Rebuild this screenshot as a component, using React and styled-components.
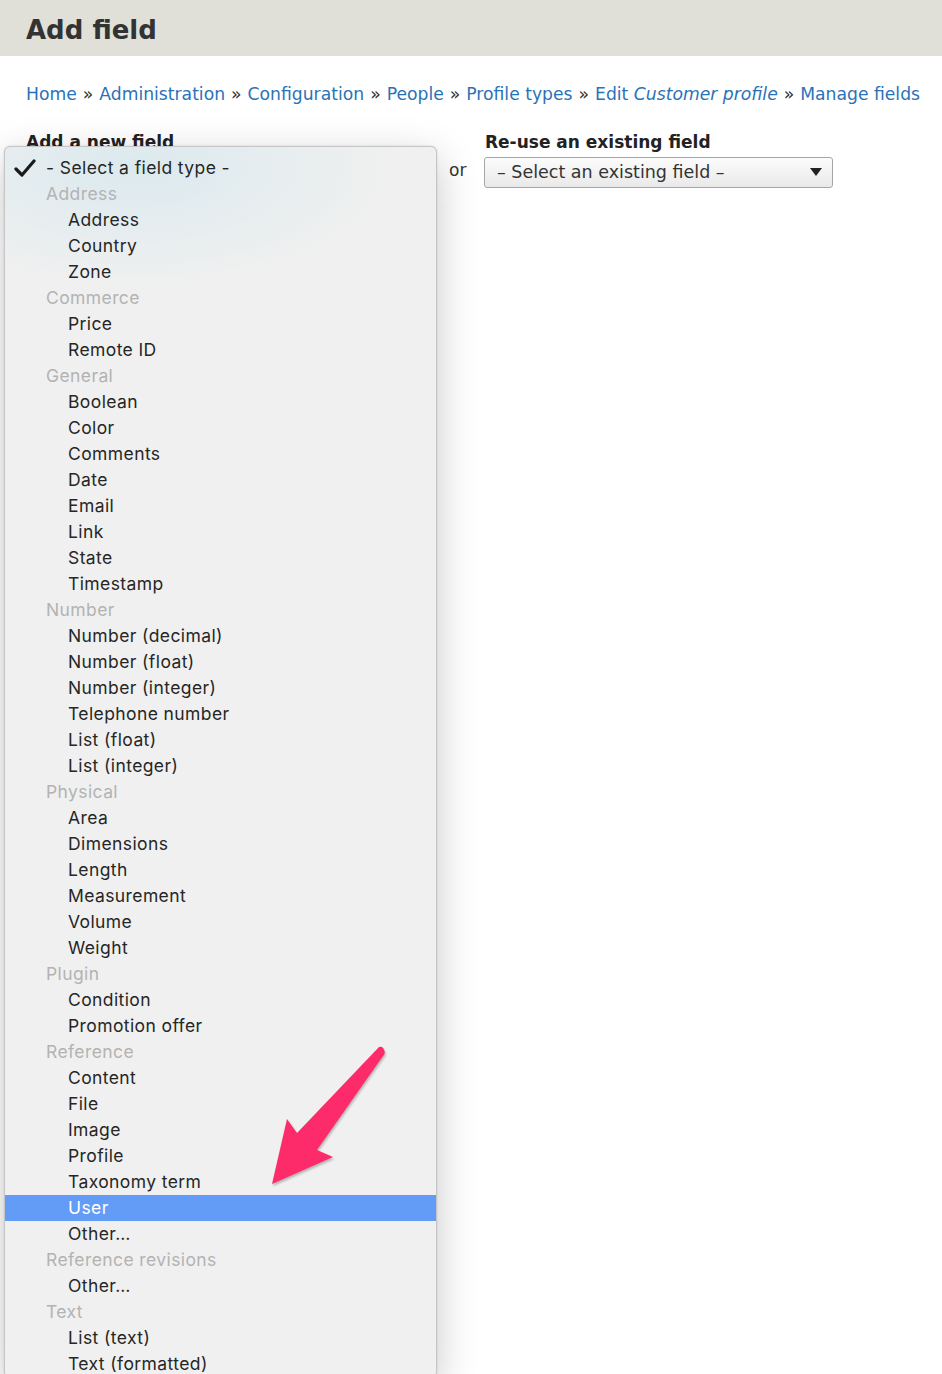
import React from 'react';
import styled, { createGlobalStyle } from 'styled-components';

const GlobalStyle = createGlobalStyle`
    html, body {
        margin: 0;
        padding: 0;
        overflow: hidden;
        background: #fff;
    }
    body {
        font-family: "DejaVu Sans", Verdana, sans-serif;
        color: #333;
    }
`;

const Page = styled.div`
    position: relative;
    min-height: 1374px;
`;

const Header = styled.header`
    background: #e0e0d8;
    height: 56px;
    display: flex;
    align-items: center;
    padding: 4px 26px 0;
    box-sizing: border-box;
`;

const Title = styled.h1`
    margin: 0;
    font-size: 26px;
    font-weight: bold;
    color: #333;
`;

const Breadcrumb = styled.nav`
    padding: 27px 26px 0;
    font-size: 17.2px;
    line-height: 22px;
    color: #333;
    white-space: nowrap;
`;

const Crumb = styled.a`
    color: #2a72b8;
    text-decoration: none;
`;

const Sep = styled.span`
    margin: 0 6px;
`;

const Form = styled.div`
    display: grid;
    grid-template-columns: 423px 36px 1fr;
    padding: 25px 0 0 26px;
`;

const FieldLabel = styled.div`
    font-size: 17px;
    font-weight: bold;
    color: #222;
    line-height: 24px;
`;

const Or = styled.div`
    padding-top: 30px;
    font-size: 17px;
    color: #333;
`;

const Select = styled.div`
    margin: 3px 0 0 -1px;
    width: 349px;
    height: 31px;
    box-sizing: border-box;
    border: 1px solid #a6a6a6;
    border-radius: 3px;
    background: linear-gradient(#fcfcfc, #e9e9e9);
    display: flex;
    align-items: center;
    justify-content: space-between;
    padding: 0 10px 1px 12px;
    font-size: 17.5px;
    color: #333;
`;

const Caret = styled.span`
    width: 0;
    height: 0;
    border-left: 6px solid transparent;
    border-right: 6px solid transparent;
    border-top: 8px solid #222;
`;

const Menu = styled.ul`
    position: absolute;
    left: 4px;
    top: 146px;
    width: 431px;
    margin: 0;
    padding: 8px 0 0;
    list-style: none;
    border: 1px solid #c6c6c6;
    border-radius: 6px;
    background:
        radial-gradient(ellipse 260px 120px at 30% 20px, rgba(214, 232, 238, 0.8), rgba(240, 240, 240, 0) 100%),
        #f0f0f0;
    box-shadow: 0 12px 40px rgba(0, 0, 0, 0.22), 0 0 2px rgba(0, 0, 0, 0.15);
    font-family: Inter, "Noto Sans", sans-serif;
    font-size: 17.5px;
    letter-spacing: 0.4px;
`;

const Row = styled.li`
    height: 26px;
    line-height: 26px;
    padding-left: ${props => (props.group || props.top ? 41 : 63)}px;
    color: ${props => (props.group ? '#b3b3b3' : props.active ? '#fff' : '#262626')};
    background: ${props => (props.active ? '#629cf6' : 'transparent')};
    position: relative;
    white-space: nowrap;
`;

const Check = styled.svg`
    position: absolute;
    left: 9px;
    top: 4px;
`;

const Arrow = styled.svg`
    position: absolute;
    left: 260px;
    top: 1040px;
    filter: drop-shadow(1px 2px 1px rgba(0, 0, 0, 0.25));
`;

const groups = [
    ['Address', ['Address', 'Country', 'Zone']],
    ['Commerce', ['Price', 'Remote ID']],
    ['General', ['Boolean', 'Color', 'Comments', 'Date', 'Email', 'Link', 'State', 'Timestamp']],
    ['Number', ['Number (decimal)', 'Number (float)', 'Number (integer)', 'Telephone number', 'List (float)', 'List (integer)']],
    ['Physical', ['Area', 'Dimensions', 'Length', 'Measurement', 'Volume', 'Weight']],
    ['Plugin', ['Condition', 'Promotion offer']],
    ['Reference', ['Content', 'File', 'Image', 'Profile', 'Taxonomy term', 'User', 'Other…']],
    ['Reference revisions', ['Other…']],
    ['Text', ['List (text)', 'Text (formatted)']]
];

const crumbs = ['Home', 'Administration', 'Configuration', 'People', 'Profile types'];

const App = () => (
    <Page>
        <GlobalStyle />
        <Header>
            <Title>Add field</Title>
        </Header>
        <Breadcrumb>
            {crumbs.map(c => (
                <React.Fragment key={c}>
                    <Crumb href="#">{c}</Crumb>
                    <Sep>»</Sep>
                </React.Fragment>
            ))}
            <Crumb href="#">Edit <em>Customer profile</em></Crumb>
            <Sep>»</Sep>
            <Crumb href="#">Manage fields</Crumb>
        </Breadcrumb>
        <Form>
            <div>
                <FieldLabel>Add a new field</FieldLabel>
            </div>
            <Or>or</Or>
            <div>
                <FieldLabel>Re-use an existing field</FieldLabel>
                <Select>
                    <span>– Select an existing field –</span>
                    <Caret />
                </Select>
            </div>
        </Form>
        <Menu>
            <Row top>
                <Check width="22" height="18" viewBox="0 0 22 18">
                    <path d="M2 10 L8 16 L20 2" fill="none" stroke="#1a1a1a" strokeWidth="3.2" strokeLinecap="round" strokeLinejoin="round" />
                </Check>
                - Select a field type -
            </Row>
            {groups.map(([name, items]) => (
                <React.Fragment key={name}>
                    <Row group>{name}</Row>
                    {items.map((item, i) => (
                        <Row key={name + i} active={name === 'Reference' && item === 'User'}>
                            {item}
                        </Row>
                    ))}
                </React.Fragment>
            ))}
        </Menu>
        <Arrow width="130" height="150" viewBox="260 1040 130 150">
            <path
                d="M379 1047 Q383 1046 384 1050 Q386 1053 383 1056 L317 1150 L333 1157 L272 1184 L287 1119 L297 1133 Z"
                fill="#fe2b6b"
            />
        </Arrow>
    </Page>
);

export default App;
